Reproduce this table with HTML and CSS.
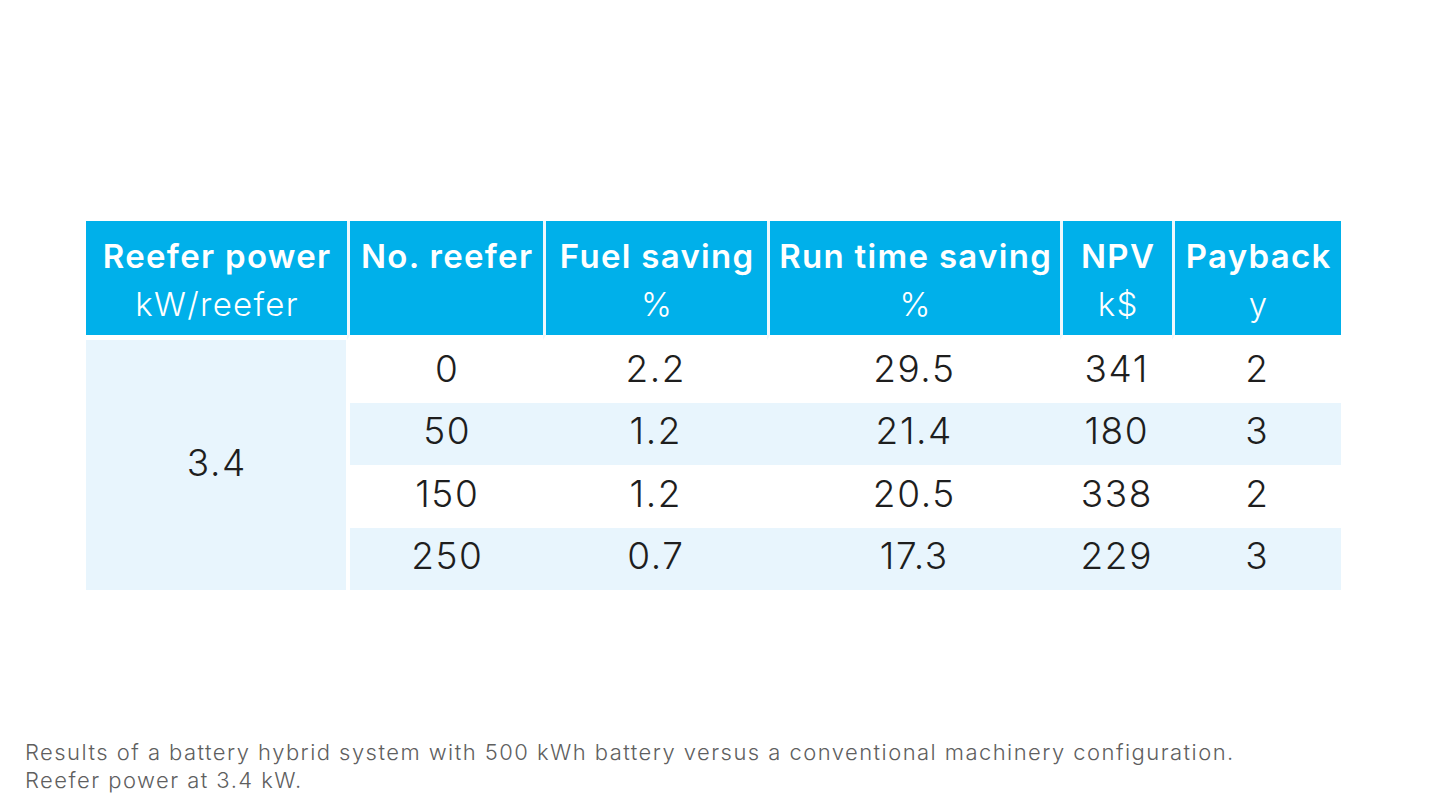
FILE: index.html
```html
<!DOCTYPE html>
<html lang="en">
<head>
<meta charset="utf-8">
<title>Battery hybrid results</title>
<link rel="stylesheet" href="styles.css">
</head>
<body>
<main class="slide">
  <table class="results">
    <colgroup>
      <col class="c1"><col class="c2"><col class="c3"><col class="c4"><col class="c5"><col class="c6">
    </colgroup>
    <thead>
      <tr>
        <th><span class="h">Reefer power</span><span class="u">kW/reefer</span></th>
        <th><span class="h">No. reefer</span><span class="u">&nbsp;</span></th>
        <th><span class="h">Fuel saving</span><span class="u">%</span></th>
        <th><span class="h">Run time saving</span><span class="u">%</span></th>
        <th><span class="h">NPV</span><span class="u">k$</span></th>
        <th><span class="h">Payback</span><span class="u">y</span></th>
      </tr>
    </thead>
    <tbody>
      <tr>
        <td class="group" rowspan="4">3.4</td>
        <td class="first">0</td><td>2.2</td><td>29.5</td><td>341</td><td>2</td>
      </tr>
      <tr class="alt">
        <td class="first">50</td><td>1.2</td><td>21.4</td><td>180</td><td>3</td>
      </tr>
      <tr>
        <td class="first">150</td><td>1.2</td><td>20.5</td><td>338</td><td>2</td>
      </tr>
      <tr class="alt">
        <td class="first">250</td><td>0.7</td><td>17.3</td><td>229</td><td>3</td>
      </tr>
    </tbody>
  </table>
  <p class="caption">Results of a battery hybrid system with 500 kWh battery versus a conventional machinery configuration.<br>Reefer power at 3.4 kW.</p>
</main>
</body>
</html>
```
FILE: styles.css
```css
html, body {
  margin: 0;
  padding: 0;
  background: #ffffff;
}
body {
  font-family: "Inter", "Lato", sans-serif;
  font-variant-ligatures: none;
  color: #1a1a1a;
}
.slide {
  width: 1440px;
  height: 810px;
  box-sizing: border-box;
  padding: 221px 0 0 86px;
  display: flex;
  flex-direction: column;
}
.results {
  width: 1255px;
  table-layout: fixed;
  border-collapse: separate;
  border-spacing: 0;
}
.c1 { width: 261px; }
.c2 { width: 196px; }
.c3 { width: 224px; }
.c4 { width: 293px; }
.c5 { width: 112px; }
.c6 { width: 169px; }

.results th {
  background: #00b0ea;
  background-clip: padding-box;
  color: #ffffff;
  height: 119px;
  padding: 11px 0 0;
  box-sizing: border-box;
  vertical-align: top;
  text-align: center;
  border-bottom: 5px solid #ffffff;
  white-space: nowrap;
}
.results th + th {
  border-left: 3px solid #eef8fd;
}
.results th .h {
  display: block;
  font-weight: 600;
  font-size: 33px;
  line-height: 48px;
  letter-spacing: 1.3px;
  text-indent: 1.3px;
}
.results th .u {
  display: block;
  font-weight: 300;
  font-size: 33px;
  line-height: 48px;
  letter-spacing: 1.3px;
  text-indent: 1.3px;
}
.results td {
  height: 62.5px;
  padding: 0 0 6px;
  box-sizing: border-box;
  text-align: center;
  vertical-align: middle;
  font-size: 37px;
  font-weight: 300;
  letter-spacing: 1.6px;
  text-indent: 1.6px;
  color: #1e1e1e;
}
.results td.group {
  background: #e8f5fd;
  border-right: 1px solid #ffffff;
}
.results td.first {
  border-left: 3px solid #ffffff;
}
.results tr.alt td {
  background: #e8f5fd;
}
.caption {
  margin: auto 0 16px -61px;
  font-size: 22px;
  line-height: 28px;
  font-weight: 300;
  letter-spacing: 1.45px;
  color: #5f5f5f;
}
```
